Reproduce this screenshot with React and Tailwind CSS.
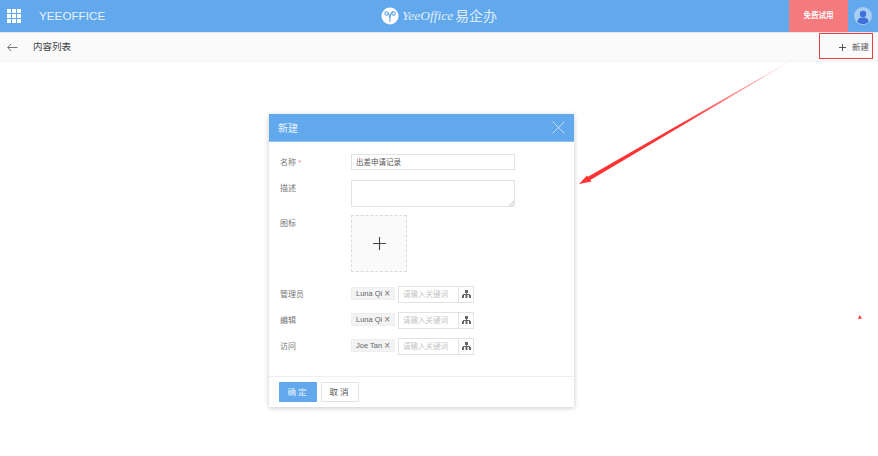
import React from "react";

const sans = "font-['Liberation_Sans','Noto_Sans_CJK_SC',sans-serif]";

function Org() {
  return (
    <svg width="9" height="9" viewBox="0 0 9 9" fill="#666">
      <rect x="3" y="0" width="3" height="3" />
      <rect x="4" y="3" width="1" height="2" />
      <rect x="1" y="4" width="7" height="1" />
      <rect x="0" y="5" width="2" height="3" />
      <rect x="3.5" y="5" width="2" height="3" />
      <rect x="7" y="5" width="2" height="3" />
    </svg>
  );
}

function PersonRow({ label, name }) {
  return (
    <div className="flex h-[26px] items-start">
      <div className="w-[71px] pt-[3px] text-[8px] leading-[12px] text-[#777]">{label}</div>
      <div className="flex items-start">
        <div className="mt-[1px] flex h-[13px] w-[44px] items-center border border-[#eeeeee] bg-[#f3f3f3] pl-[4px] text-[7.5px] text-[#666]">
          {name}<span className="ml-[2px] text-[10px] leading-none text-[#777]">×</span>
        </div>
        <div className="ml-[3px] flex h-[17px] w-[76px] border border-[#e2e2e2] bg-white">
          <div className="flex-1 pl-[4px] text-[7.5px] leading-[15px] text-[#c4c4c4]">请输入关键词</div>
          <div className="flex w-[15px] items-center justify-center border-l border-[#e2e2e2]"><Org /></div>
        </div>
      </div>
    </div>
  );
}

export default function App() {
  return (
    <div className={`relative flex h-[456px] w-[878px] flex-col overflow-hidden bg-white ${sans}`}>
      <header className="flex h-[32px] shrink-0 items-center bg-[#62a8ec]">
        <div className="ml-[7px] grid grid-cols-3 gap-[1px]">
          {Array.from({ length: 9 }).map((_, i) => <div key={i} className="h-[4px] w-[4px] bg-white" />)}
        </div>
        <div className="ml-[18px] w-[342px] text-[11.7px] text-white/85">YEEOFFICE</div>
        <div className="flex items-center">
          <svg width="18" height="18" viewBox="0 0 18 18" className="mt-[-1px]">
            <circle cx="9" cy="9" r="8.5" fill="#fff" />
            <path d="M9 15 C9 11 9 8 7 5.5 M9 11 C9 8 10 6 12 4.5" stroke="#62a8ec" strokeWidth="1.2" fill="none" />
            <circle cx="5.5" cy="6.5" r="1.7" stroke="#62a8ec" strokeWidth="1.1" fill="none" />
            <circle cx="12.5" cy="6.5" r="1.7" stroke="#62a8ec" strokeWidth="1.1" fill="none" />
          </svg>
          <span className="ml-[3px] w-[51px] font-['Liberation_Serif',serif] text-[13.5px] italic text-white/80">YeeOffice</span>
          <span className="ml-[2px] text-[14px] text-white/80">易企办</span>
        </div>
        <div className="ml-auto flex h-full w-[59px] items-center justify-center bg-[#f47a7d] text-[7.5px] font-bold text-white">免费试用</div>
        <div className="flex h-full w-[30px] items-center justify-center">
          <svg width="18" height="18" viewBox="0 0 18 18">
            <circle cx="9" cy="9" r="9" fill="#a9cdf2" />
            <circle cx="9" cy="7" r="3.2" fill="#3f6fd8" />
            <path d="M3.5 15 C3.5 11.5 6 10.5 9 10.5 C12 10.5 14.5 11.5 14.5 15 C13 16.5 11 17 9 17 C7 17 5 16.5 3.5 15Z" fill="#3f6fd8" />
          </svg>
        </div>
      </header>

      <div className="flex h-[28px] shrink-0 items-center border-t border-[#e8e8e8] bg-[#fafafa] pt-[1px]">
        <svg width="11" height="9" viewBox="0 0 11 9" className="ml-[7px]" fill="none" stroke="#555" strokeWidth="0.8">
          <path d="M10.5 4.5H0.8M4 1L0.8 4.5L4 8" />
        </svg>
        <span className="ml-[15px] text-[9.5px] text-[#444]">内容列表</span>
        <div className="ml-auto mr-[9px] flex items-center text-[8.5px] text-[#555]">
          <svg width="7" height="7" viewBox="0 0 7 7" stroke="#444" strokeWidth="0.9" className="mr-[6px]"><path d="M3.5 0V7M0 3.5H7" /></svg>
          新建
        </div>
      </div>
      <div className="h-[2px] w-full shrink-0 bg-[#f6f6f6]" />

      <main className="flex-1 pl-[269px] pt-[52px]">
        <div className="w-[305px] bg-white shadow-[0_1px_5px_rgba(0,0,0,0.22)]">
          <div className="flex h-[28px] items-center justify-between border-b border-[#8dc0f0] bg-[#62a8ec] pl-[9px] pr-[9px]">
            <span className="pt-[1px] text-[10px] text-white/85">新建</span>
            <svg width="13" height="13" viewBox="0 0 13 13" stroke="#fff" strokeWidth="0.6"><path d="M0.5 0.5L12.5 12.5M12.5 0.5L0.5 12.5" /></svg>
          </div>

          <div className="px-[11px] pt-[12px]">
            <div className="flex h-[26px] items-start">
              <div className="w-[71px] pt-[3px] text-[8px] leading-[12px] text-[#777]">名称 <span className="text-[#f08a8a]">*</span></div>
              <div className="h-[16px] w-[164px] border border-[#e2e2e2] pl-[4px] text-[7.5px] leading-[15px] text-[#555]">出差申请记录</div>
            </div>
            <div className="flex h-[35px] items-start">
              <div className="w-[71px] pt-[3px] text-[8px] leading-[12px] text-[#777]">描述</div>
              <div className="relative h-[27px] w-[164px] border border-[#e2e2e2]">
                <svg width="5" height="5" viewBox="0 0 5 5" className="absolute bottom-0 right-0" stroke="#999" strokeWidth="0.6"><path d="M0 5L5 0M2.5 5L5 2.5" /></svg>
              </div>
            </div>
            <div className="flex h-[71px] items-start">
              <div className="w-[71px] pt-[3px] text-[8px] leading-[12px] text-[#777]">图标</div>
              <div className="flex h-[57px] w-[56px] items-center justify-center border border-dashed border-[#dcdcdc] bg-[#fafafa]">
                <svg width="13" height="13" viewBox="0 0 13 13" stroke="#444" strokeWidth="1.1"><path d="M6.5 0V13M0 6.5H13" /></svg>
              </div>
            </div>
            <PersonRow label="管理员" name="Luna Qi" />
            <PersonRow label="编辑" name="Luna Qi" />
            <PersonRow label="访问" name="Joe Tan" />
          </div>

          <div className="mt-[12px] flex h-[31px] items-center gap-[4px] border-t border-[#eeeeee] pl-[10px]">
            <div className="flex h-[20px] w-[38px] items-center justify-center bg-[#62a8ec] text-[8.5px] tracking-[2px] text-white/85">确定</div>
            <div className="flex h-[20px] w-[38px] items-center justify-center border border-[#e2e2e2] text-[8.5px] tracking-[2px] text-[#555]">取消</div>
          </div>
        </div>
      </main>

      <div className="absolute left-[819px] top-[33px] h-[26px] w-[54px] border-[1.5px] border-[#ee4040]" />
      <svg className="absolute left-0 top-0" width="878" height="456" viewBox="0 0 878 456">
        <defs>
          <linearGradient id="fade" x1="806" y1="52" x2="580" y2="184" gradientUnits="userSpaceOnUse">
            <stop offset="0" stopColor="#ff3b3b" stopOpacity="0.08" />
            <stop offset="0.3" stopColor="#ff3b3b" stopOpacity="0.6" />
            <stop offset="0.55" stopColor="#ff3333" />
          </linearGradient>
        </defs>
        <path d="M806 52L587.5 177L589.5 180.5Z" fill="url(#fade)" />
        <path d="M579 184L587 175.5L591.5 181.5Z" fill="#ff3333" />
        <path d="M858 319L859.5 315L862 318.5Z" fill="#ff3b3b" />
      </svg>
    </div>
  );
}
